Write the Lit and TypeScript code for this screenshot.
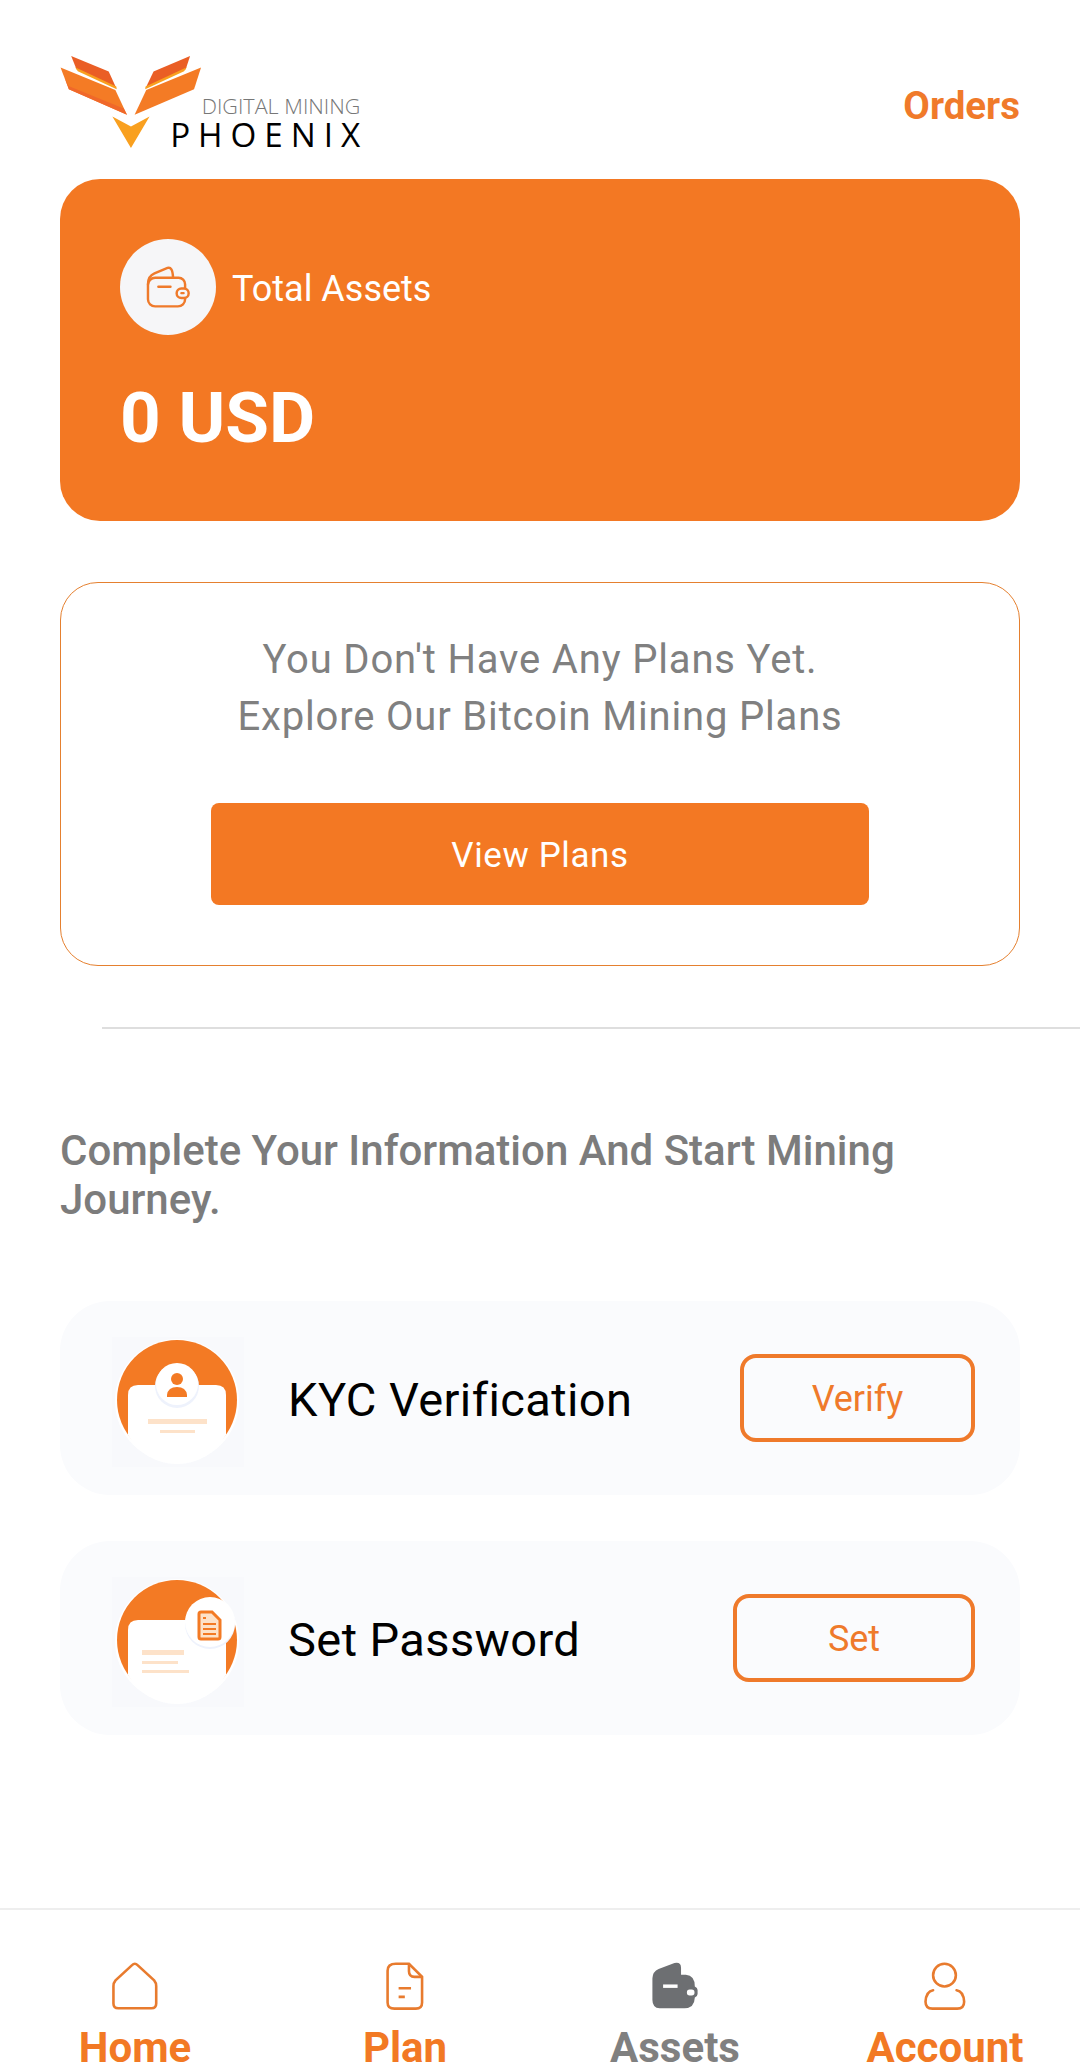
import { LitElement, html, css, svg } from "lit";
import { customElement } from "lit/decorators.js";

const kycArt = svg`<svg class="art" viewBox="0 0 136 136">
  <rect x="4" y="4" width="132" height="130" fill="#f5f7fb" opacity=".55"/>
  <circle cx="69" cy="68" r="62" fill="#fff"/>
  <circle cx="69" cy="67" r="60" fill="#f37a24"/>
  <path d="M20 102V62q0-10 10-10h78q10 0 10 10v40A56 56 0 0 1 20 102Z" fill="#fff"/>
  <circle cx="69" cy="53" r="22" fill="#eef2fc"/><circle cx="69" cy="51" r="21" fill="#fff"/>
  <circle cx="69" cy="46" r="6" fill="#f37a24"/><path d="M59 62q1-8 10-8t10 8v2H59Z" fill="#f37a24"/>
  <rect x="40" y="86" width="59" height="5" fill="#fde2c9"/><rect x="52" y="97" width="35" height="3" fill="#fde2c9"/>
</svg>`;

const pwdArt = svg`<svg class="art" viewBox="0 0 136 136">
  <rect x="4" y="4" width="132" height="130" fill="#f5f7fb" opacity=".55"/>
  <circle cx="69" cy="68" r="62" fill="#fff"/>
  <circle cx="69" cy="67" r="60" fill="#f37a24"/>
  <path d="M20 102V57q0-10 10-10h78q10 0 10 10v45A56 56 0 0 1 20 102Z" fill="#fff"/>
  <circle cx="102" cy="51" r="25" fill="#eef2fc"/><circle cx="102" cy="49" r="25" fill="#fff"/>
  <path d="M91 41q0-2 2-2h11l8 8v17q0 2-2 2H93q-2 0-2-2Z" fill="#fde2c9" stroke="#f37a24" stroke-width="3"/>
  <path d="M95 51h13M95 56h13M95 61h13M95 45h3" stroke="#f37a24" stroke-width="2.2"/>
  <rect x="34" y="77" width="42" height="5" fill="#fde2c9"/><rect x="34" y="88" width="36" height="3" fill="#fde2c9"/><rect x="34" y="97" width="47" height="3" fill="#fde2c9"/>
</svg>`;

@customElement("app-root")
export class AppRoot extends LitElement {
  static styles = css`
    :host { display: block; width: 1080px; height: 2066px; overflow: hidden; background: #fff; font-family: Roboto, "Liberation Sans", sans-serif; }
    .page { height: 2066px; display: flex; flex-direction: column; }
    main { flex: 1; padding: 56px 60px 0; min-height: 0; }
    header { display: flex; justify-content: space-between; align-items: center; height: 92px; margin-bottom: 31px; }
    .logo { display: block; width: 302px; height: 92px; overflow: visible; }
    .logo text { font-family: "Open Sans", sans-serif; font-weight: 300; }
    .logo .name { font-weight: 400; }
    .orders { color: #f07a2a; font-size: 38.5px; font-weight: 700; margin-top: 6px; }
    .assets { height: 342px; box-sizing: border-box; background: #f37823; border-radius: 40px; padding: 60px; color: #fff; }
    .assets-head { display: flex; align-items: center; gap: 16px; }
    .coin { width: 96px; height: 96px; border-radius: 50%; background: #f6f6f8; display: flex; align-items: center; justify-content: center; }
    .coin svg { width: 44px; height: 42px; display: block; }
    .assets-label { font-size: 36px; margin-top: 3px; }
    .assets-value { font-size: 71px; font-weight: 700; line-height: 80px; margin-top: 43px; }
    .plans { margin-top: 61px; height: 384px; box-sizing: border-box; border: 1px solid #e5802f; border-radius: 38px; padding-top: 49px; display: flex; flex-direction: column; align-items: center; }
    .plans p { margin: 0; font-size: 40px; line-height: 56.5px; color: #808080; text-align: center; letter-spacing: .83px; }
    .view { margin-top: 58px; width: 658px; height: 102px; box-sizing: border-box; padding-top: 3px; background: #f37823; color: #fff; border-radius: 8px; font-size: 35px; display: flex; align-items: center; justify-content: center; letter-spacing: .6px; }
    .divider { height: 2px; background: #dedede; margin: 61px -60px 0 42px; }
    h2 { margin: 97px 0 0; font-size: 42px; line-height: 49px; font-weight: 500; color: #7c7c7c; }
    .rows { display: flex; flex-direction: column; gap: 46px; margin-top: 77px; }
    .row { height: 194px; background: #fafbfd; border-radius: 50px; display: flex; align-items: center; padding: 0 45px 0 48px; }
    .art { width: 136px; height: 136px; display: block; flex: none; margin-top: 6px; filter: blur(.5px); }
    .row-title { flex: 1; margin: 2px 0 0 44px; font-size: 47px; color: #000; letter-spacing: .4px; }
    .btn { box-sizing: border-box; height: 88px; padding-top: 2px; border: 4px solid #ef7a2b; border-radius: 16px; color: #ef7a2b; font-size: 36px; display: flex; align-items: center; justify-content: center; }
    .btn.verify { width: 235px; }
    .btn.set { width: 242px; }
    nav { flex: none; height: 158px; box-sizing: border-box; border-top: 2px solid #eee; display: grid; grid-template-columns: repeat(4, 270px); padding-top: 51px; }
    .tab { display: flex; flex-direction: column; align-items: center; color: #f27924; }
    .tab.off { color: #808080; }
    .tab svg { display: block; height: 50px; width: 50px; flex: none; }
    .tab span { font-size: 42px; font-weight: 700; line-height: 48px; margin-top: 13px; white-space: nowrap; }
  `;

  render() {
    return html`<div class="page">
      <main>
        <header>
          <svg class="logo" viewBox="60 78 906 277">
            <polygon points="92,78 205,125 228,175 108,118" fill="#ea5e25"/>
            <polygon points="104,112 228,170 229,178 112,124" fill="#f9a01f"/>
            <polygon points="60,113 225,180 260,255 85,178" fill="#f47b25"/>
            <polygon points="72,142 85,178 260,255 250,236 84,168" fill="#f0682a"/>
            <polygon points="450,78 340,125 316,175 437,118" fill="#ea5e25"/>
            <polygon points="440,112 316,170 315,178 432,124" fill="#f9a01f"/>
            <polygon points="483,113 318,180 283,255 462,178" fill="#f47b25"/>
            <polygon points="216,260 272,290 328,260 272,355" fill="#f9a01f"/>
            <text x="485" y="252" font-size="63" fill="#777" textLength="478" lengthAdjust="spacingAndGlyphs">DIGITAL MINING</text>
            <text class="name" x="390" y="351" font-size="100" fill="#000" textLength="572" lengthAdjust="spacing">PHOENIX</text>
          </svg>
          <div class="orders">Orders</div>
        </header>

        <section class="assets">
          <div class="assets-head">
            <div class="coin">
              <svg viewBox="260 286 135 129" fill="none" stroke="#ef7a2b" stroke-width="7.5" stroke-linecap="round">
                <path d="M380 352V342a20 20 0 0 0-20-20H288a22 22 0 0 0-22 22v44a22 22 0 0 0 22 22h70a22 22 0 0 0 22-22v-3"/>
                <path d="M266 342c0-18 8-28 20-33l40-17c10-3 16 4 17 30"/>
                <path d="M298 350h37"/>
                <rect x="354" y="355" width="37" height="29" rx="14.5"/>
                <rect x="365" y="366" width="14" height="7" rx="3.5" fill="#ef7a2b" stroke="none"/>
              </svg>
            </div>
            <div class="assets-label">Total Assets</div>
          </div>
          <div class="assets-value">0 USD</div>
        </section>

        <section class="plans">
          <p>You Don't Have Any Plans Yet.<br />Explore Our Bitcoin Mining Plans</p>
          <div class="view">View Plans</div>
        </section>

        <div class="divider"></div>

        <h2>Complete Your Information And Start Mining Journey.</h2>

        <div class="rows">
          <div class="row">
            ${kycArt}
            <div class="row-title">KYC Verification</div>
            <div class="btn verify">Verify</div>
          </div>
          <div class="row">
            ${pwdArt}
            <div class="row-title">Set Password</div>
            <div class="btn set">Set</div>
          </div>
        </div>
      </main>

      <nav>
        <div class="tab">
          <svg viewBox="320 212 145 145" fill="none" stroke="#e87b2e" stroke-width="7.5">
            <path d="M392 220q4 0 8 4l48 44q6 7 6 17v50q0 14-14 14h-96q-14 0-14-14v-50q0-10 6-17l48-44q4-4 8-4Z"/>
          </svg>
          <span>Home</span>
        </div>
        <div class="tab">
          <svg viewBox="1104 212 145 145" fill="none" stroke="#e87b2e" stroke-width="7.5">
            <path d="M1150 220h38l38 38v74q0 18-18 18h-62q-20 0-20-18v-92q0-20 24-20Z"/>
            <path d="M1188 220v22q0 16 16 16h22"/>
            <path d="M1158 291h36M1158 316h18"/>
          </svg>
          <span>Plan</span>
        </div>
        <div class="tab off">
          <svg viewBox="320 212 145 145">
            <path fill="#6d6f72" d="M327 262q1-20 18-27l46-17q19-4 19 14v20h14q26 2 26 34 8 4 8 10v12q0 6-8 10-1 31-30 31h-72q-21-1-21-24Z"/>
            <rect x="358" y="280" width="42" height="10" fill="#fff"/>
            <rect x="427" y="295" width="22" height="17" rx="8" fill="#fff"/>
          </svg>
          <span>Assets</span>
        </div>
        <div class="tab">
          <svg viewBox="1104 212 145 145" fill="none" stroke="#e87b2e" stroke-width="7.5" stroke-linecap="round">
            <circle cx="1175" cy="253" r="33"/>
            <path d="M1142 297q-20 3-22 33 0 20 20 20h72q20 0 20-20-2-30-22-33"/>
          </svg>
          <span>Account</span>
        </div>
      </nav>
    </div>`;
  }
}
